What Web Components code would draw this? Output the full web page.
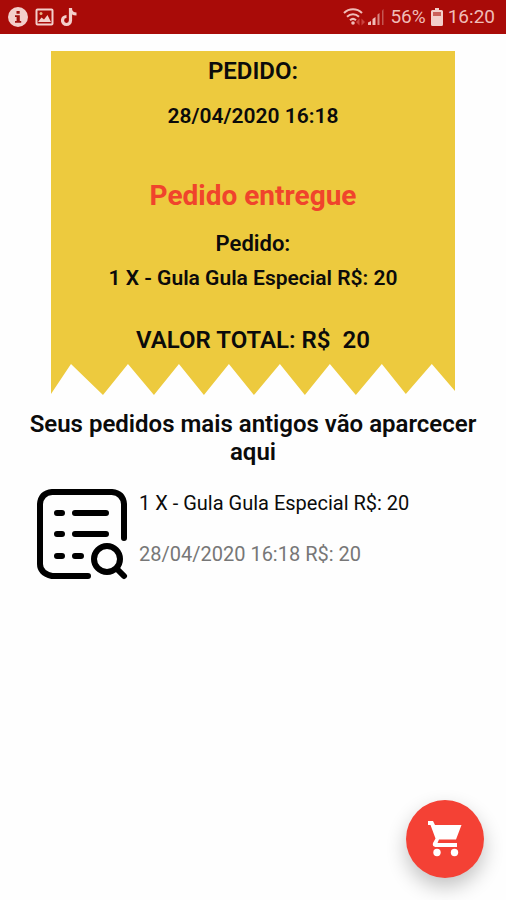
<!DOCTYPE html>
<html lang="pt-BR">
<head>
<meta charset="utf-8">
<meta name="viewport" content="width=device-width, initial-scale=1">
<title>Pedidos</title>
<style>
body { margin: 0; background: #fefefe; color: #0b0b0b; font-family: Roboto, "Liberation Sans", sans-serif; }
</style>
</head>
<body>
<orders-screen></orders-screen>
<script>
const define = (name, html) => customElements.define(name, class extends HTMLElement {
  constructor() {
    super();
    const t = document.createElement('template');
    t.innerHTML = html;
    this.attachShadow({ mode: 'open' }).append(t.content.cloneNode(true));
  }
});

define('status-bar', `
<style>
:host { display: flex; justify-content: space-between; align-items: center; height: 34px; padding: 0 11px 0 8px; box-sizing: border-box; background: #a90b08; color: #f0bdb8; font-size: 19px; line-height: 22px; }
div { display: flex; align-items: center; gap: 5px; }
svg { display: block; flex: none; }
.signals { gap: 2px; }
.apps { gap: 7px; }
</style>
<div class="apps">
  <svg width="20" height="20" viewBox="0 0 20 20"><circle cx="10" cy="10" r="10" fill="#f3cfcb"/><path d="M8.5 4h3.2v2.800H8.500zM7 8.300h4.800v5.700h1.400v1.700H7V14h1.600v-4H7z" fill="#a0100d"/></svg>
  <svg width="19" height="18" viewBox="0 0 19 18"><rect x="1.500" y="1.500" width="16" height="15" rx="1" fill="none" stroke="#f3cfcb" stroke-width="2"/><path d="M3 14l3.500-4.500 2.500 2 3.500-4.500 3.500 7z" fill="#f3cfcb"/><circle cx="6" cy="5.500" r="1.500" fill="#e8b183"/></svg>
  <svg width="17" height="20" viewBox="0 0 17 20"><path d="M9.500 1v12.500a4 4 0 1 1-4-4M9.500 2.500c.7 3 3 4.500 6 4.500" fill="none" stroke="#f3cfcb" stroke-width="3.200"/></svg>
</div>
<div>
  <div class="signals">
    <svg width="22" height="18" viewBox="0 0 22 18"><g fill="none" stroke="#f0bdb8" stroke-width="2"><path d="M1 5c5-5 13-5 18 0M4 8.700c3.500-3.300 8.500-3.300 12 0M7 12.200c2-1.800 4-1.800 6 0"/></g><circle cx="10" cy="15" r="1.800" fill="#f0bdb8"/><path d="M13 14l3.500-3.500v7zM22 14l-3.500-3.500v7z" fill="#c9423f"/></svg>
    <svg width="18" height="18" viewBox="0 0 18 18"><path d="M1 17v-2.500L4 13v4zM5.500 17v-6l3-2v8z" fill="#f0bdb8"/><path d="M10.500 17V6.500l2-1.500v12z" fill="#d98782"/><path d="M15 17V2.500L16.500 1v16z" fill="#c45752"/></svg>
  </div>
  <span>56%</span>
  <svg width="12" height="18" viewBox="0 0 12 18"><path d="M4 0h4v2h2.500A1.500 1.500 0 0 1 12 3.500v13a1.500 1.500 0 0 1-1.500 1.500h-9A1.500 1.500 0 0 1 0 16.500v-13A1.500 1.500 0 0 1 1.500 2H4z" fill="#f3cfcb"/><path d="M2 4h8v4H2z" fill="#cb605b"/></svg>
  <time>16:20</time>
</div>`);

define('order-receipt', `
<style>
:host { display: block; width: 80%; margin: 17px auto 0; text-align: center; }
.paper { background: #edca3e; padding-top: 6px; display: flow-root; }
svg { display: block; width: 100%; height: 32px; fill: #edca3e; }
::slotted(*) { margin: 0; font-weight: 600; line-height: 28px; }
::slotted([slot=title]) { font-size: 24px; }
::slotted([slot=date]) { font-size: 21px; margin-top: 17px; }
::slotted([slot=status]) { font-size: 28px; font-weight: 700; line-height: 36px; margin-top: 48px; color: #f0442c; }
::slotted([slot=label]) { font-size: 22px; margin-top: 16px; }
::slotted([slot=item]) { font-size: 21px; margin-top: 6px; }
::slotted([slot=total]) { font-size: 24px; margin: 34px 0 9px; white-space: pre; }
</style>
<div class="paper">
  <slot name="title"></slot><slot name="date"></slot><slot name="status"></slot>
  <slot name="label"></slot><slot name="item"></slot><slot name="total"></slot>
</div>
<svg viewBox="0 0 405 32" preserveAspectRatio="none" aria-hidden="true"><path d="M0 0V31L20 1L52 32L77 1L103 32L128 1L153 32L178 1L203 32L229 1L254 32L279 1L305 32L331 1L355 31L381 1L405 29V0z"/></svg>`);

define('order-entry', `
<style>
:host { display: flex; align-items: flex-start; gap: 11px; padding: 0 37px; }
svg { display: block; flex: none; }
.text { display: flex; flex-direction: column; gap: 23px; font-size: 20px; line-height: 28px; }
.date { color: #777; }
</style>
<svg width="91" height="91" viewBox="0 0 91 91" fill="none" stroke="#000" stroke-width="6" stroke-linecap="round" aria-hidden="true">
  <path d="M51 87H15Q3 84 3 75V15Q4 4 15 3H75Q86 4 87 15V49"/>
  <path d="M20 24h5M38 24h31M20 45h5M38 45h31M20 67h5M38 67h6"/>
  <circle cx="70" cy="70" r="13"/><path d="M80 80l7 7"/>
</svg>
<div class="text"><slot name="item"></slot><span class="date"><slot name="date"></slot></span></div>`);

define('cart-button', `
<style>
:host { position: fixed; right: 22px; bottom: 22px; }
button { display: grid; place-items: center; width: 78px; height: 78px; padding: 0; border: 0; border-radius: 50%; background: #f44135; box-shadow: 0 9px 20px rgba(0,0,0,.24); cursor: pointer; }
svg { display: block; }
</style>
<button type="button" aria-label="Carrinho">
  <svg width="36" height="36" viewBox="0 0 36 36" fill="#fff"><path d="M1 0H6L8 4H34.500L29 18.500H12L10.500 22H30V26H8.500Q5 25.500 6 22L8.500 17.500L3.500 4H1z"/><circle cx="10" cy="31.500" r="3.700"/><circle cx="27.500" cy="31.500" r="3.700"/></svg>
</button>`);

define('orders-screen', `
<style>
:host { display: block; }
h2 { margin: 15px 24px 23px; font-size: 24px; line-height: 28px; font-weight: 600; text-align: center; }
</style>
<status-bar></status-bar>
<main>
  <order-receipt>
    <h1 slot="title">PEDIDO:</h1>
    <p slot="date">28/04/2020 16:18</p>
    <p slot="status">Pedido entregue</p>
    <p slot="label">Pedido:</p>
    <p slot="item">1 X - Gula Gula Especial R$: 20</p>
    <p slot="total">VALOR TOTAL: R$  20</p>
  </order-receipt>
  <h2>Seus pedidos mais antigos vão aparcecer aqui</h2>
  <order-entry>
    <span slot="item">1 X - Gula Gula Especial R$: 20</span>
    <span slot="date">28/04/2020 16:18 R$: 20</span>
  </order-entry>
</main>
<cart-button></cart-button>`);
</script>
</body>
</html>
